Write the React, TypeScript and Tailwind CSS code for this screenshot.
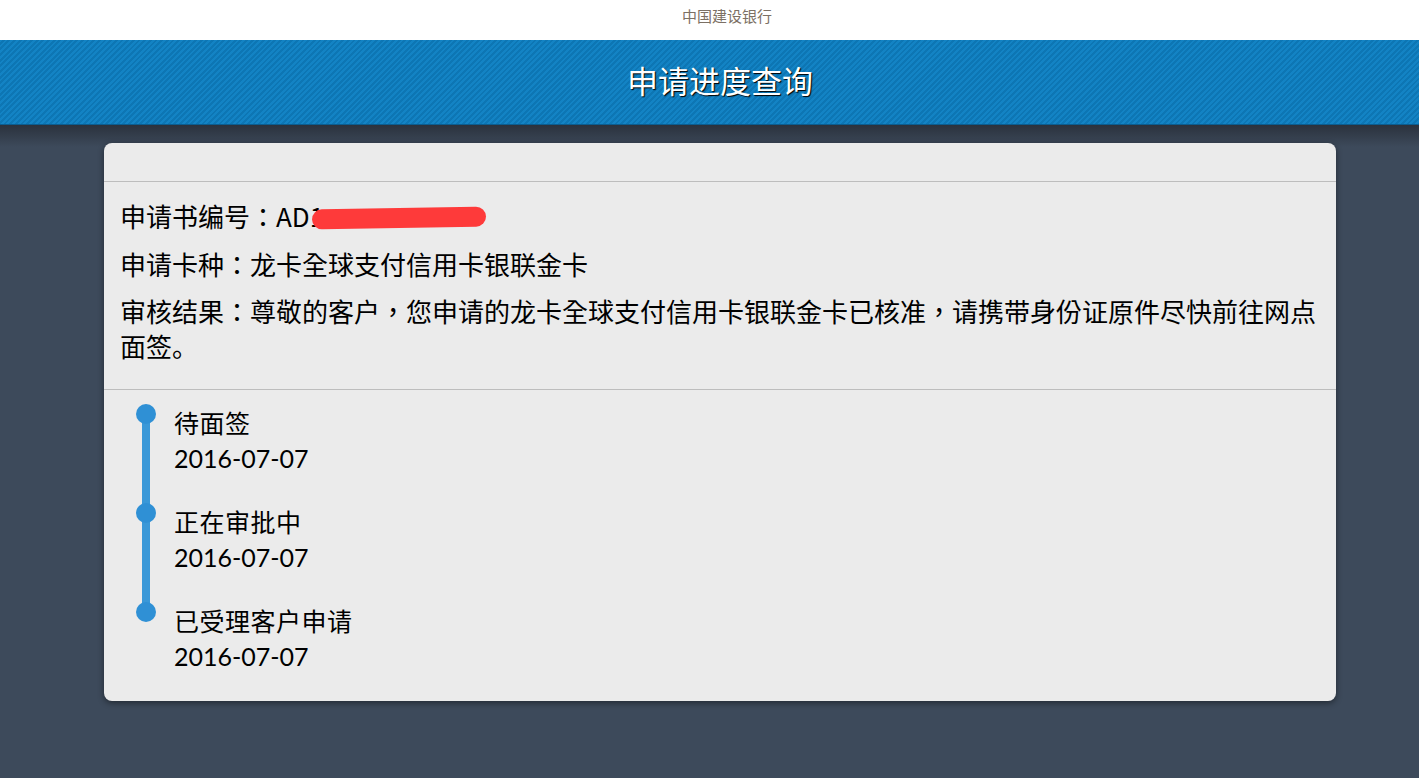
import React from "react"

const steps = [
  { title: "待面签", date: "2016-07-07" },
  { title: "正在审批中", date: "2016-07-07" },
  { title: "已受理客户申请", date: "2016-07-07" },
]

const cjk = "font-['Noto_Sans_CJK_SC','Noto_Sans',sans-serif]"
const tc = "font-['Noto_Sans_CJK_TC','Noto_Sans',sans-serif]"

export default function App() {
  return (
    <div className="w-full min-h-[778px] overflow-hidden bg-[#3d4a5b]">
      <div className={`w-[1440px] ${cjk}`}>
        {/* top bar */}
        <div className="h-10 bg-white flex justify-center pt-[4px] pl-[14px]">
          <span className="text-[15px] leading-[24px] text-[#7c7064]">中国建设银行</span>
        </div>

        {/* header */}
        <div className="relative h-[85px] pb-[6px] border-b border-[#0b5d90] bg-[#1180c0] bg-[repeating-linear-gradient(-45deg,#1383c4_0px,#1383c4_2px,#0d76b4_2px,#0d76b4_4px)] flex items-center justify-center">
          <h1 className="text-[31px] text-white font-normal leading-none [text-shadow:1px_1px_1px_#000]">
            申请进度查询
          </h1>
        </div>

        {/* content */}
        <div className="bg-[linear-gradient(to_bottom,#2b323d_0px,#3d4a5b_22px)] pt-[18px] pb-[77px]">
          <div className="ml-[104px] w-[1232px] rounded-[8px] bg-[#ebebeb] shadow-[0_2px_6px_rgba(0,0,0,0.45)] text-black">
            <div className="h-[39px] border-b border-[#bdbdbd]" />

            <div className={`px-4 pt-4 pb-[13px] border-b border-[#bdbdbd] text-[26px] leading-[35px] ${tc}`}>
              <p className="mb-[13px] flex items-center">
                申请书编号：AD1
                <span className="inline-block -ml-[12px] mt-[4px] h-[20px] w-[174px] rounded-full bg-[#fe3a3a] -rotate-1" />
              </p>
              <p className="mb-[12px]">申请卡种：龙卡全球支付信用卡银联金卡</p>
              <p className="mb-[13px]">
                审核结果：尊敬的客户，您申请的龙卡全球支付信用卡银联金卡已核准，请携带身份证原件尽快前往网点面签<span className={cjk}>。</span>
              </p>
            </div>

            <div className="relative pl-[70px] pt-[16px] pb-[27px]">
              <div className="absolute left-[38px] top-[24px] h-[198px] w-[8px] bg-[#3a98d8]" />
              {steps.map((s, i) => (
                <div key={i} className={`relative ${i < steps.length - 1 ? "mb-[29px]" : ""}`}>
                  <span className="absolute -left-[38px] top-[-2px] h-5 w-5 rounded-full bg-[#2f90d5]" />
                  <div className="text-[25px] leading-[35px] tracking-[0.5px] font-['Lato','Noto_Sans_CJK_SC',sans-serif]">
                    {s.title}
                  </div>
                  <div className="text-[25px] leading-[35px] font-['Lato','Noto_Sans_CJK_SC',sans-serif]">
                    {s.date}
                  </div>
                </div>
              ))}
            </div>
          </div>
        </div>
      </div>
    </div>
  )
}
